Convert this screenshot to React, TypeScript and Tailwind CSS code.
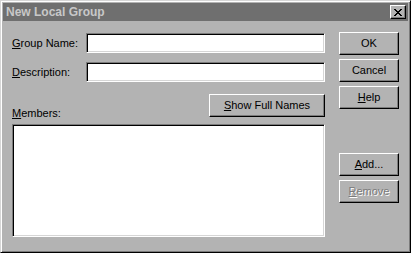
const raised =
  'border border-t-white border-l-white border-r-black border-b-black shadow-[inset_-1px_-1px_0_#7b7b7b]'
const sunken =
  'border border-t-[#7b7b7b] border-l-[#7b7b7b] border-r-white border-b-white shadow-[inset_1px_1px_0_#000,inset_-1px_-1px_0_#d6d6d6] bg-white'

function Btn({ children, disabled, className = '' }: { children: React.ReactNode; disabled?: boolean; className?: string }) {
  return (
    <button
      className={`${raised} bg-[#b3b3b3] h-[23px] flex items-center justify-center text-[11px] leading-none ${
        disabled ? 'text-[#7b7b7b] [text-shadow:1px_1px_0_#ffffff]' : 'text-black'
      } ${className}`}
    >
      {children}
    </button>
  )
}

function Acc({ children }: { children: React.ReactNode }) {
  return <u className="underline underline-offset-[1px]">{children}</u>
}

export default function App() {
  return (
    <div className="w-[411px] h-[253px] bg-[#b3b3b3] font-['Liberation_Sans',Arial,sans-serif] text-[11px] text-black border border-t-[#d6d6d6] border-l-[#d6d6d6] border-r-black border-b-black shadow-[inset_1px_1px_0_#fff,inset_-1px_-1px_0_#7b7b7b] p-[2px] flex flex-col">
      {/* Title bar */}
      <div className="h-[18px] bg-[#6f6f6f] flex items-center justify-between pl-[3px] pr-[2px]">
        <span className="text-[12px] font-bold text-[#c8c8c8] leading-none">New Local Group</span>
        <div className={`${raised} bg-[#b3b3b3] w-[16px] h-[14px] flex items-center justify-center`}>
          <svg width="8" height="7" viewBox="0 0 8 7" shapeRendering="crispEdges">
            <path
              fill="#000"
              d="M0 0h2v1h1v1h2V1h1V0h2v1h-1v1h-1v1h-1v1h1v1h1v1h1v1H6V6H5V5H3v1H2v1H0V6h1V5h1V4h1V3H2V2H1V1H0z"
            />
          </svg>
        </div>
      </div>

      {/* Body */}
      <div className="flex flex-1 pl-[9px]">
        <div className="w-[313px] pt-[12px] flex flex-col">
          <div className="flex items-center h-[20px]">
            <span className="w-[74px]">
              <Acc>G</Acc>roup Name:
            </span>
            <div className={`${sunken} w-[239px] h-[20px]`} />
          </div>
          <div className="flex items-center h-[20px] mt-[9px]">
            <span className="w-[74px]">
              <Acc>D</Acc>escription:
            </span>
            <div className={`${sunken} w-[239px] h-[20px]`} />
          </div>
          <div className="flex items-end justify-between h-[23px] mt-[12px]">
            <span className="leading-[13px] -mb-[3px]">
              <Acc>M</Acc>embers:
            </span>
            <Btn className="w-[116px]">
              <span>
                <Acc>S</Acc>how Full Names
              </span>
            </Btn>
          </div>
          <div className={`${sunken} w-full h-[113px] mt-[7px]`} />
        </div>

        <div className="ml-[14px] w-[60px] pt-[11px] flex flex-col gap-[4px]">
          <Btn>OK</Btn>
          <Btn>Cancel</Btn>
          <Btn>
            <span>
              <Acc>H</Acc>elp
            </span>
          </Btn>
          <Btn className="mt-[40px]">
            <span>
              <Acc>A</Acc>dd...
            </span>
          </Btn>
          <Btn disabled>
            <span>
              <Acc>R</Acc>emove
            </span>
          </Btn>
        </div>
      </div>
    </div>
  )
}
